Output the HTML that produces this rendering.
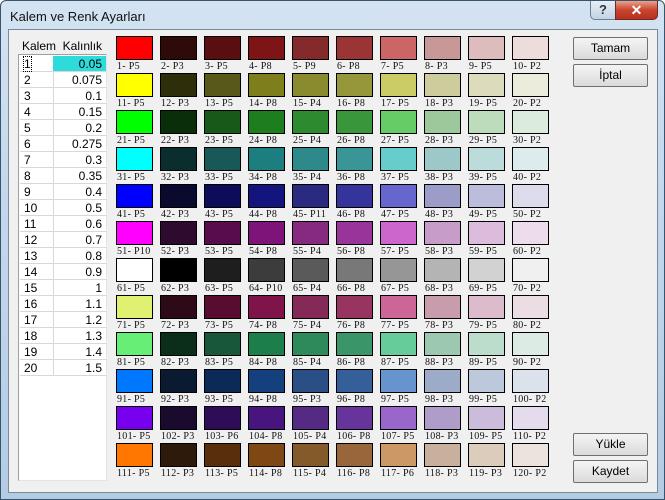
<!DOCTYPE html>
<html><head><meta charset="utf-8"><style>
*{margin:0;padding:0;box-sizing:border-box}
body{width:665px;height:500px;overflow:hidden;background:#fff;font-family:"Liberation Sans",sans-serif;position:relative}
.win{position:absolute;left:0;top:0;width:665px;height:500px;background:linear-gradient(180deg,#d3e3f2 0%,#c3d8ec 40%,#b3cce4 100%);border:1px solid #39536d;border-radius:6px 6px 0 0}
.title{position:absolute;left:9px;top:8px;font-size:13px;color:#111}
.client{position:absolute;left:8px;top:29px;width:650px;height:464px;background:#f0f0f0;border:1px solid #7a8a9c}
.hb{position:absolute;top:0;left:589px;width:26px;height:19px;border:1px solid #6d7f95;border-top:none;border-radius:0 0 0 5px;background:linear-gradient(#e6eef6,#c3d3e3);font-size:13px;font-weight:bold;color:#334;text-align:center;line-height:18px}
.cb{position:absolute;top:0;left:614px;width:43px;height:19px;border:1px solid #6d2a22;border-top:none;border-radius:0 0 5px 0;background:linear-gradient(#e9a08e,#c9452f 50%,#b7301c);color:#fff;font-size:14px;font-weight:bold;text-align:center;line-height:18px}
.lbl{position:absolute;font-size:12px;color:#000}
.list{position:absolute;left:18px;top:54px;width:89px;height:427px;background:#fff;border:1px solid #a0a0a0;border-right-color:#e3e3e3;border-bottom-color:#e3e3e3}
.row{position:absolute;left:1px;width:86px;height:16px;border-bottom:1px solid #d8d8d8;font-size:12px}
.row .a{position:absolute;left:4px;top:1px}
.row .b{position:absolute;left:33px;top:0;width:53px;height:15px;border-left:1px solid #d8d8d8;text-align:right;padding-right:4px;padding-top:1px}
.sw{position:absolute;width:37px;height:24px;border:1px solid #000}
.sl{position:absolute;font-family:"Liberation Serif",serif;font-size:10px;line-height:11px;color:#111;letter-spacing:.3px;white-space:nowrap}
.btn{position:absolute;left:573px;width:75px;height:23px;border:1px solid #707070;border-radius:2px;background:linear-gradient(#f4f4f4,#e8e8e8 50%,#dadada);font-size:12px;text-align:center;line-height:21px;color:#000}
</style></head><body>
<div class="win">
<div class="title">Kalem ve Renk Ayarları</div>
<div class="hb">?</div><div class="cb">✕</div>
</div>
<div class="client"></div>
<div class="lbl" style="left:22px;top:39px">Kalem&nbsp; Kalınlık</div>
<div class="list" id="list"></div>
<div class="btn" style="top:37px">Tamam</div>
<div class="btn" style="top:64px">İptal</div>
<div class="btn" style="top:433px">Yükle</div>
<div class="btn" style="top:460px">Kaydet</div>
<div id="sw"></div>
<script>
var v=["0.05","0.075","0.1","0.15","0.2","0.275","0.3","0.35","0.4","0.5","0.6","0.7","0.8","0.9","1","1.1","1.2","1.3","1.4","1.5"];
var h="";
for(var i=0;i<20;i++){var sel=i==0;
h+='<div class="row" style="top:'+(1+i*16)+'px"><span class="a"'+(sel?' style="outline:1px dotted #000;outline-offset:0"':'')+'>'+(i+1)+'</span><span class="b"'+(sel?' style="background:#2edbdb;border-left-color:#2edbdb"':'')+'>'+v[i]+'</span></div>';}
document.getElementById("list").innerHTML=h;
var C=[
["#ff0000","#2e0a08","#5a0e10","#7e1416","#852a2a","#9b3434","#cc6666","#c89898","#dcbcbc","#ecdcdc"],
["#ffff00","#2e2e0a","#585818","#7e7e1c","#8a8a2e","#96963a","#cccc66","#cccc9c","#dcdcbc","#ececdc"],
["#00ff00","#0a2e0a","#185818","#1c7e1c","#2e8a2e","#3a963a","#66cc66","#9cc89c","#bcdcbc","#dcecdc"],
["#00ffff","#0a2e2e","#185858","#1c7e7e","#2e8a8a","#3a9696","#66cccc","#9cc8c8","#bcdcdc","#dcecec"],
["#0000ff","#0a0a2e","#0c0c58","#14147e","#2a2a80","#34349b","#6666cc","#9c9cc8","#bcbcdc","#dcdcec"],
["#ff00ff","#2e0a2e","#580c4e","#7e147a","#852a80","#98349a","#cc66cc","#c89cc8","#dcbcdc","#ecdcec"],
["#ffffff","#000000","#1e1e1e","#3c3c3c","#5a5a5a","#787878","#969696","#b4b4b4","#d2d2d2","#f0f0f0"],
["#e0f070","#2e0a18","#580c30","#7e144a","#852a58","#983460","#cc6699","#c89cac","#dcbccc","#ecdce4"],
["#66ee77","#0a2e18","#185838","#1c7e4a","#2e8a5a","#3a9668","#66cc99","#9cc8b0","#bcdccc","#dcece4"],
["#0077ff","#0a1a30","#0c2a58","#14407e","#2a4f85","#345f98","#6694cc","#9cacc8","#bcc8dc","#dce2ec"],
["#7700ee","#1a0a2e","#2e0c58","#48147e","#542a85","#66349a","#9966cc","#b09cc8","#ccbcdc","#e4dcec"],
["#ff7700","#2e1a0a","#582e0c","#7e4814","#855a2a","#98663a","#cc9966","#c8b09c","#dcccbc","#ece4dc"]];
var P=[
["P5","P3","P5","P8","P9","P8","P5","P3","P5","P2"],
["P5","P3","P5","P8","P4","P8","P5","P3","P5","P2"],
["P5","P3","P5","P8","P4","P8","P5","P3","P5","P2"],
["P5","P3","P5","P8","P4","P8","P5","P3","P5","P2"],
["P5","P3","P5","P8","P11","P8","P5","P3","P5","P2"],
["P10","P3","P5","P8","P4","P8","P5","P3","P5","P2"],
["P5","P3","P5","P10","P4","P8","P5","P3","P5","P2"],
["P5","P3","P5","P8","P4","P8","P5","P3","P5","P2"],
["P5","P3","P5","P8","P4","P8","P5","P3","P5","P2"],
["P5","P3","P5","P8","P3","P8","P5","P3","P5","P2"],
["P5","P3","P6","P8","P4","P8","P5","P3","P5","P2"],
["P5","P3","P5","P8","P4","P8","P6","P3","P3","P2"]];
h="";
for(var r=0;r<12;r++)for(var c=0;c<10;c++){var x=116+c*44,y=36+r*37;
h+='<div class="sw" style="left:'+x+'px;top:'+y+'px;background:'+C[r][c]+'"></div>';
h+='<div class="sl" style="left:'+(x+1)+'px;top:'+(y+25)+'px">'+(r*10+c+1)+'- '+P[r][c]+'</div>';}
document.getElementById("sw").innerHTML=h;
</script>
</body></html>
